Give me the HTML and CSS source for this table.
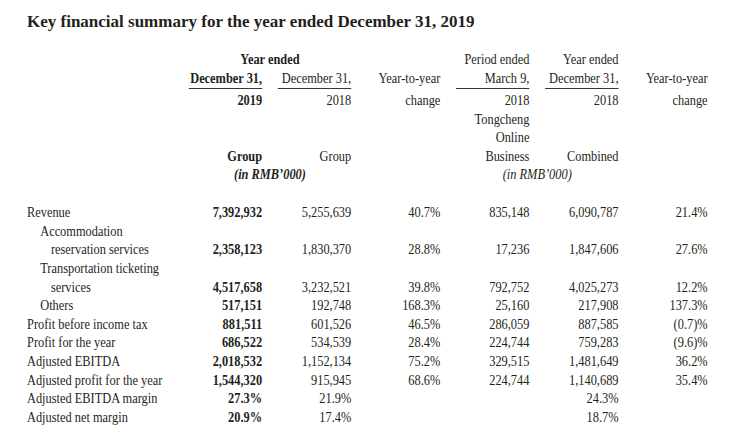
FILE: index.html
```html
<!DOCTYPE html>
<html lang="en">
<head>
<meta charset="utf-8">
<title>Key financial summary</title>
<link rel="stylesheet" href="styles.css">
</head>
<body>
<main class="page">
  <h1 class="title">Key financial summary for the year ended December 31, 2019</h1>
  <div class="table-wrap">
    <table class="fin">
      <colgroup>
        <col class="c-label">
        <col class="c-num"><col class="c-num"><col class="c-num">
        <col class="c-num"><col class="c-num"><col class="c-num">
      </colgroup>
      <thead>
        <tr class="h-a">
          <td></td>
          <th colspan="2" class="b center">Year ended</th>
          <td></td>
          <th>Period ended</th>
          <th>Year ended</th>
          <td></td>
        </tr>
        <tr class="h-b">
          <td></td>
          <th class="b ul">December 31,</th>
          <th class="ul">December 31,</th>
          <th>Year-to-year</th>
          <th class="ul">March 9,</th>
          <th class="ul">December 31,</th>
          <th>Year-to-year</th>
        </tr>
        <tr class="h-c">
          <td></td>
          <th class="b">2019</th>
          <th>2018</th>
          <th>change</th>
          <th>2018</th>
          <th>2018</th>
          <th>change</th>
        </tr>
        <tr>
          <td></td><td></td><td></td><td></td>
          <th>Tongcheng</th>
          <td></td><td></td>
        </tr>
        <tr>
          <td></td><td></td><td></td><td></td>
          <th>Online</th>
          <td></td><td></td>
        </tr>
        <tr>
          <td></td>
          <th class="b">Group</th>
          <th>Group</th>
          <td></td>
          <th>Business</th>
          <th>Combined</th>
          <td></td>
        </tr>
        <tr>
          <td></td>
          <th colspan="2" class="b i center">(in RMB’000)</th>
          <td></td>
          <th colspan="2" class="i center">(in RMB’000)</th>
          <td></td>
        </tr>
        <tr class="gap"><td colspan="7"></td></tr>
      </thead>
      <tbody>
        <tr>
          <td class="label">Revenue</td>
          <td class="b">7,392,932</td><td>5,255,639</td><td>40.7%</td>
          <td>835,148</td><td>6,090,787</td><td>21.4%</td>
        </tr>
        <tr>
          <td class="label ind1">Accommodation</td>
          <td></td><td></td><td></td><td></td><td></td><td></td>
        </tr>
        <tr>
          <td class="label ind2">reservation services</td>
          <td class="b">2,358,123</td><td>1,830,370</td><td>28.8%</td>
          <td>17,236</td><td>1,847,606</td><td>27.6%</td>
        </tr>
        <tr>
          <td class="label ind1">Transportation ticketing</td>
          <td></td><td></td><td></td><td></td><td></td><td></td>
        </tr>
        <tr>
          <td class="label ind2">services</td>
          <td class="b">4,517,658</td><td>3,232,521</td><td>39.8%</td>
          <td>792,752</td><td>4,025,273</td><td>12.2%</td>
        </tr>
        <tr>
          <td class="label ind1">Others</td>
          <td class="b">517,151</td><td>192,748</td><td>168.3%</td>
          <td>25,160</td><td>217,908</td><td>137.3%</td>
        </tr>
        <tr>
          <td class="label">Profit before income tax</td>
          <td class="b">881,511</td><td>601,526</td><td>46.5%</td>
          <td>286,059</td><td>887,585</td><td>(0.7)%</td>
        </tr>
        <tr>
          <td class="label">Profit for the year</td>
          <td class="b">686,522</td><td>534,539</td><td>28.4%</td>
          <td>224,744</td><td>759,283</td><td>(9.6)%</td>
        </tr>
        <tr>
          <td class="label">Adjusted EBITDA</td>
          <td class="b">2,018,532</td><td>1,152,134</td><td>75.2%</td>
          <td>329,515</td><td>1,481,649</td><td>36.2%</td>
        </tr>
        <tr>
          <td class="label">Adjusted profit for the year</td>
          <td class="b">1,544,320</td><td>915,945</td><td>68.6%</td>
          <td>224,744</td><td>1,140,689</td><td>35.4%</td>
        </tr>
        <tr>
          <td class="label">Adjusted EBITDA margin</td>
          <td class="b">27.3%</td><td>21.9%</td><td></td>
          <td></td><td>24.3%</td><td></td>
        </tr>
        <tr>
          <td class="label">Adjusted net margin</td>
          <td class="b">20.9%</td><td>17.4%</td><td></td>
          <td></td><td>18.7%</td><td></td>
        </tr>
      </tbody>
    </table>
  </div>
</main>
</body>
</html>
```

FILE: styles.css
```css
html, body {
  margin: 0;
  padding: 0;
  background: #ffffff;
  overflow: hidden;
}

body {
  font-family: "Liberation Serif", "Times New Roman", serif;
  color: #231f20;
}

.page {
  padding: 12px 0 0 27px;
}

.title {
  margin: 0 0 18px 0;
  font-size: 17px;
  line-height: 20px;
  font-weight: bold;
  white-space: nowrap;
}

.table-wrap {
  width: 825px;
  transform: scaleX(0.825);
  transform-origin: 0 0;
}

.fin {
  table-layout: fixed;
  border-collapse: separate;
  border-spacing: 19px 0;
  margin-left: -19px;
  width: 863px;
  font-size: 15px;
  line-height: 18.6px;
}

.c-label { width: 177px; }
.c-num { width: 89px; }

.fin th,
.fin td {
  padding: 0;
  text-align: right;
  font-weight: normal;
  white-space: nowrap;
  vertical-align: baseline;
}

.fin .label {
  text-align: left;
}

.fin .ind1 { padding-left: 16px; }
.fin .ind2 { padding-left: 29px; }

.fin .b { font-weight: bold; }
.fin .i { font-style: italic; }
.fin .center { text-align: center; }

.h-b th,
.h-b td {
  padding-bottom: 1px;
}

.fin .ul {
  border-bottom: 1px solid #3a3637;
}

.h-c th,
.h-c td {
  padding-top: 1.8px;
}

.gap td {
  height: 19.3px;
  line-height: 0;
}
```
